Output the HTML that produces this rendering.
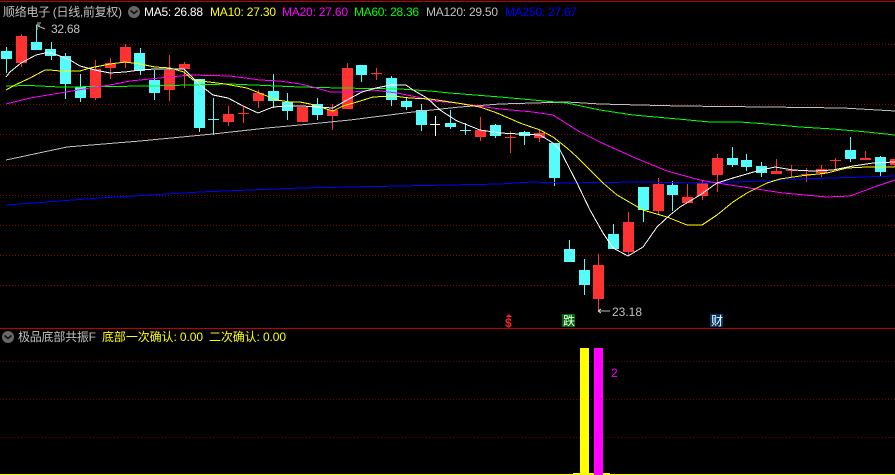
<!DOCTYPE html>
<html><head><meta charset="utf-8"><title>K线</title>
<style>
html,body{margin:0;padding:0;background:#000;width:895px;height:475px;overflow:hidden}
svg{position:absolute;left:0;top:0}
text{font-family:"Liberation Sans","WenQuanYi Zen Hei",sans-serif;font-size:12px}
.z{font-family:"WenQuanYi Zen Hei","Noto Sans CJK SC",sans-serif}
</style></head><body>
<svg width="895" height="475" viewBox="0 0 895 475" xmlns="http://www.w3.org/2000/svg">
<rect width="895" height="475" fill="#000"/>
<g stroke-width="1" stroke-dasharray="1 2" shape-rendering="crispEdges">
<path stroke="#900000" d="M0 44.5H895M0 74.5H895M0 104.5H895M0 134.5H895M0 165.5H895M0 195.5H895M0 225.5H895M0 255.5H895M0 285.5H895"/>
<path stroke="#700000" d="M0 361.5H895M0 399.5H895M0 437.5H895"/>
</g>
<path d="M0 1.5H895M0 328.5H895" stroke="#c00000" stroke-width="1" shape-rendering="crispEdges"/>

<!-- cyan candles -->
<g shape-rendering="crispEdges">
<path stroke="#54fcfc" stroke-width="1" fill="none" d="M6.5 47V73M36.5 25V42M51.5 42V60M65.5 53V99M80.5 74V102M140.5 48V75M154.5 70V100M199.5 79V132M213.5 98V135M208 119.5H219M273.5 74V108M287.5 93V120M317.5 98V120M361.5 65V82M391.5 76V106M406.5 97V110M421.5 104V131M450.5 110V129M465.5 123V135M460 130.5H471M495.5 124V138M524.5 131V145M554.5 143V186M569.5 240V262M584.5 259V295M613.5 224V249M643.5 187V222M672.5 181V211M732.5 147V167M746.5 154V171M761.5 162V177M850.5 137V162M880.5 156V176"/>
<path fill="#54fcfc" d="M1 51h11v8H1zM31 42h11v8H31zM45 49h11v7H45zM60 56h11v28H60zM75 87h11v11H75zM134 53h11v18H134zM149 80h11v13H149zM194 79h11v49H194zM268 91h11v10H268zM282 102h11v9H282zM312 104h11v11H312zM356 65h11v10H356zM386 78h11v22H386zM401 101h11v6H401zM416 110h11v15H416zM445 123h11v4H445zM490 125h11v11H490zM519 132h11v4H519zM549 143h11v35H549zM564 249h11v13H564zM579 270h11v15H579zM608 234h11v15H608zM638 187h11v23H638zM667 185h11v10H667zM727 158h11v7H727zM741 160h11v7H741zM756 166h11v7H756zM845 150h11v9H845zM875 157h11v15H875z"/>
<!-- red candles -->
<path stroke="#ff3232" stroke-width="1" fill="none" d="M21.5 34V67M95.5 60V100M110.5 58V79M125.5 44V68M169.5 55V101M184.5 62V88M228.5 106V126M243.5 107V123M238 113.5H249M258.5 90V108M332.5 104V130M347.5 63V109M376.5 68V80M371 73.5H382M480.5 117V141M510.5 131V153M505 137.5H516M539.5 130V142M598.5 254V310M628.5 212V256M658.5 178V214M687.5 184V203M702.5 180V200M717.5 154V192M776.5 159V174M791.5 165V177M786 170.5H797M806.5 168V182M801 174.5H811M821.5 165V177M835.5 158V170M830 160.5H841M865.5 151V160"/>
<path fill="#ff3232" d="M16 36h11v27H16zM90 69h11v29H90zM105 63h11v5H105zM120 47h11v16H120zM164 70h11v20H164zM179 64h11v5H179zM223 114h11v8H223zM253 93h11v8H253zM297 107h11v15H297zM327 110h11v6H327zM342 68h11v41H342zM475 130h11v7H475zM534 133h11v5H534zM593 265h11v34H593zM623 222h11v30H623zM653 184h11v27H653zM682 197h11v6H682zM697 183h11v13H697zM712 158h11v17H712zM771 171h11v3H771zM816 169h11v4H816zM860 158h11v2H860zM890 159h5v6H890z"/>
<path stroke="#fff" d="M435.5 116V136M430 124.5H440" fill="none"/>
</g>

<!-- MA lines -->
<g fill="none" stroke-width="1" shape-rendering="crispEdges">
<polyline stroke="#c0c0c0" points="6,160 67,147 140,141 213,134 267,128 300,125 350,120 413,112 460,107 500,104 567,102 600,104 680,106 767,107 843,108 895,111"/>
<polyline stroke="#0000ff" points="6,205 100,198 200,192 300,188 400,186 500,184 532,182 563,183 640,182 700,183 767,181 800,179 895,176"/>
<polyline stroke="#00ff00" points="6,86 30,85.500 60,87 150,86 190,85 230,84 300,87 340,88 400,89 430,91 450,93 500,97 533,100 567,103 600,110 633,115 667,118 710,122 740,122 767,124 800,127 833,129 867,132 895,135"/>
<polyline stroke="#ff00ff" points="6,104 30,98 60,93 90,88 110,85 130,81 150,79 170,77 190,75 230,76 260,80 280,81 300,84 313,87 330,92 353,92 373,90 397,93 417,97 433,101 457,103 500,109 533,112 553,115 580,132 600,142 633,157 667,171 700,180 717,183 750,188 783,193 827,197 850,196 877,186 895,180"/>
<polyline stroke="#ffff00" points="6,90 15,85 30,78 45,70 50,70 60,71 80,71 90,68 110,64 125,62 140,64 155,67 170,68 184,72 193,80 225,84 247,88 257,92 267,96 277,100 290,102 300,102 310,104 320,107 333,111 343,106 357,102 373,97 393,96 410,98 430,99 457,103 480,107 497,113 520,123 540,130 553,137 567,148 577,157 590,170 603,183 617,195 643,210 667,217 687,225 702,225 717,215 733,202 747,193 767,183 780,179 800,176 827,173 847,168 867,167 895,167"/>
<polyline stroke="#ffffff" points="6,77 10,72 21,63 36,55 45,53 51,53 60,56 70,60 80,66 95,70 110,73 125,72 140,70 155,69 170,69 184,69 190,75 200,85 213,95 228,98 243,106 258,113 273,107 287,106 302,106 317,107 333,108 347,100 362,92 376,88 391,85 406,85 413,90 427,98 440,110 457,121 465,124 480,130 500,133 520,134 540,135 553,143 560,150 577,183 590,210 603,233 613,248 628,256 643,247 657,227 670,215 680,207 700,195 717,183 733,178 757,171 775,167 793,170 813,171 833,170 853,166 873,163 895,162"/>
</g>

<!-- lower pane bars -->
<g shape-rendering="crispEdges">
<rect x="0" y="474" width="895" height="1" fill="#ffff00"/>
<rect x="573" y="473" width="37" height="2" fill="#ffff00"/>
<rect x="580" y="348" width="9" height="127" fill="#ffff00"/>
<rect x="594" y="348" width="9" height="127" fill="#ff00ff"/>
<rect x="562" y="314" width="13" height="13" fill="#006a00"/>
<rect x="710" y="314" width="13" height="13" fill="#003366"/>
</g>
<text x="611" y="377" fill="#ff00ff" textLength="6">2</text>

<!-- markers -->
<text class="z" x="563" y="325" fill="#fff">跌</text>
<text class="z" x="711" y="325" fill="#fff">财</text>
<text x="505" y="327" fill="#ff2020" style="font-size:12px;font-weight:bold">$</text>
<path d="M509 314l-3 3h6z" fill="#ff2020"/>

<!-- high/low labels -->
<path d="M37 24V30M37 23h4M37 25l3 0M38 26l7 3" stroke="#c0c0c0" fill="none" shape-rendering="crispEdges"/>
<text x="51" y="33" fill="#c0c0c0" textLength="29">32.68</text>
<path d="M598 311H610M598 311l3-2M598 311l3 2" stroke="#c0c0c0" fill="none" shape-rendering="crispEdges"/>
<text x="612" y="316" fill="#c0c0c0" textLength="30">23.18</text>

<!-- header -->
<text x="3" y="16" fill="#c0c0c0" textLength="119" lengthAdjust="spacing"><tspan class="z">顺络电子</tspan> (<tspan class="z">日线</tspan>,<tspan class="z">前复权</tspan>)</text>
<circle cx="134" cy="12" r="6" fill="#666"/>
<path d="M130.500 10.500l3.500 3 3.500-3" stroke="#111" stroke-width="1.500" fill="none"/>
<text x="144" y="16" fill="#fff" textLength="59">MA5: 26.88</text>
<text x="210" y="16" fill="#ffff00" textLength="66">MA10: 27.30</text>
<text x="282" y="16" fill="#ff00ff" textLength="66">MA20: 27.60</text>
<text x="354" y="16" fill="#00ff00" textLength="65">MA60: 28.36</text>
<text x="426" y="16" fill="#c0c0c0" textLength="72">MA120: 29.50</text>
<text x="505" y="16" fill="#0000ff" textLength="72">MA250: 27.67</text>

<circle cx="8" cy="337" r="6" fill="#666"/>
<path d="M4.500 335.500l3.500 3 3.500-3" stroke="#111" stroke-width="1.500" fill="none"/>
<text x="18" y="341" fill="#c0c0c0" textLength="78"><tspan class="z">极品底部共振</tspan>F</text>
<text x="102" y="341" fill="#ffff00" textLength="101"><tspan class="z">底部一次确认</tspan>: 0.00</text>
<text x="209" y="341" fill="#ffff00" textLength="77"><tspan class="z">二次确认</tspan>: 0.00</text>
</svg>
</body></html>
